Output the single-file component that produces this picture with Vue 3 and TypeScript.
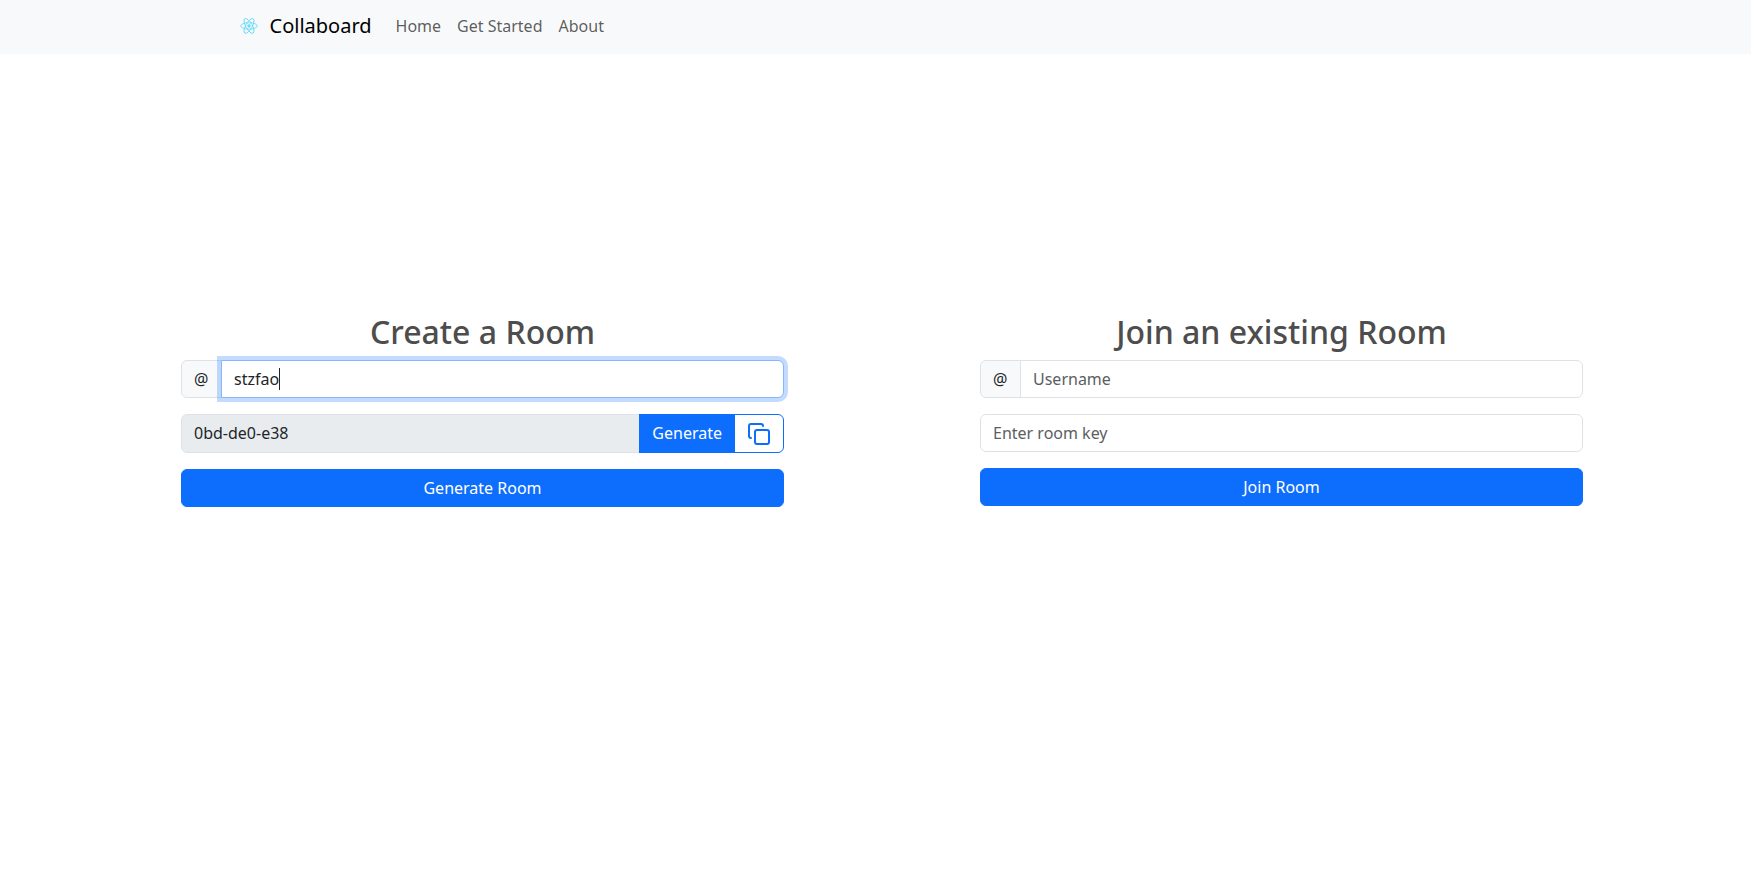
<script setup lang="ts">
import { nextTick, onMounted, ref, watch } from 'vue'

interface NavItem {
  label: string
  href: string
}

const navItems: NavItem[] = [
  { label: 'Home', href: '#home' },
  { label: 'Get Started', href: '#get-started' },
  { label: 'About', href: '#about' },
]

const username = ref('stzfao')
const roomKey = ref('0bd-de0-e38')
const joinName = ref('')
const joinKey = ref('')
const usernameInput = ref<HTMLInputElement | null>(null)
const caretLeft = ref(0)
const focused = ref(false)

const hexGroup = (): string =>
  Math.floor(Math.random() * 4096).toString(16).padStart(3, '0')

function generateKey(): void {
  roomKey.value = [hexGroup(), hexGroup(), hexGroup()].join('-')
}

function copyKey(): void {
  navigator.clipboard?.writeText(roomKey.value)
}

// Places the steady caret after the characters that precede the selection.
function placeCaret(): void {
  const input = usernameInput.value
  const context = document.createElement('canvas').getContext('2d')
  if (!input || !context) return
  const style = getComputedStyle(input)
  context.font = `${style.fontSize} ${style.fontFamily}`
  const before = input.value.slice(0, input.selectionStart ?? input.value.length)
  const start = parseFloat(style.paddingLeft) + parseFloat(style.borderLeftWidth)
  caretLeft.value = Math.round(start + context.measureText(before).width - input.scrollLeft)
}

watch(username, () => nextTick(placeCaret))

onMounted(() => {
  const input = usernameInput.value
  input?.focus()
  input?.setSelectionRange(input.value.length, input.value.length)
  placeCaret()
})
</script>

<template>
  <div class="page">
    <header class="navbar">
      <div class="navbar-inner">
        <a class="brand" href="#home">
          <svg class="brand-logo" viewBox="0 0 842 596" fill="none" stroke="#61dafb" stroke-width="24" aria-hidden="true">
            <circle cx="421" cy="296" r="46" fill="#61dafb" stroke="none" />
            <ellipse cx="421" cy="296" rx="233" ry="90" />
            <ellipse cx="421" cy="296" rx="233" ry="90" transform="rotate(60 421 296)" />
            <ellipse cx="421" cy="296" rx="233" ry="90" transform="rotate(120 421 296)" />
          </svg>
          <span>Collaboard</span>
        </a>
        <nav class="nav">
          <a v-for="item in navItems" :key="item.label" class="nav-link" :href="item.href">{{ item.label }}</a>
        </nav>
      </div>
    </header>

    <main class="rooms">
      <form class="room" @submit.prevent>
        <h2>Create a Room</h2>
        <div class="group">
          <label class="addon" for="create-name">@</label>
          <div class="caret-field">
            <input
              id="create-name"
              ref="usernameInput"
              v-model="username"
              class="field"
              type="text"
              placeholder="Username"
              aria-label="Username"
              autocomplete="off"
              spellcheck="false"
              @focus="focused = true"
              @blur="focused = false"
              @keyup="placeCaret"
              @click="placeCaret"
            />
            <span v-if="focused" class="caret" :style="{ left: caretLeft + 'px' }"></span>
          </div>
        </div>
        <div class="group group-key">
          <input v-model="roomKey" class="field" type="text" aria-label="Room key" disabled />
          <button class="btn" type="button" @click="generateKey">Generate</button>
          <button class="btn btn-outline" type="button" aria-label="Copy room key" @click="copyKey">
            <svg width="24" height="24" viewBox="0 0 24 24" fill="none" stroke="currentColor" stroke-width="2" stroke-linecap="round" stroke-linejoin="round" aria-hidden="true">
              <rect x="8" y="8" width="14" height="14" rx="2" />
              <path d="M4 16c-1.1 0-2-.9-2-2V4c0-1.1.9-2 2-2h10c1.1 0 2 .9 2 2" />
            </svg>
          </button>
        </div>
        <button class="btn" type="submit">Generate Room</button>
      </form>

      <form class="room" @submit.prevent>
        <h2>Join an existing Room</h2>
        <div class="group">
          <label class="addon" for="join-name">@</label>
          <input id="join-name" v-model="joinName" class="field" type="text" placeholder="Username" aria-label="Username" />
        </div>
        <div class="group">
          <input v-model="joinKey" class="field" type="text" placeholder="Enter room key" aria-label="Enter room key" />
        </div>
        <button class="btn" type="submit">Join Room</button>
      </form>
    </main>
  </div>
</template>

<style>
body {
  margin: 0;
  background: #fff;
}
</style>

<style scoped>
.page,
.page * {
  box-sizing: border-box;
}

.page {
  font-family: "Noto Sans", "Liberation Sans", sans-serif;
  font-size: 16px;
  line-height: 24px;
  color: #212529;
}

.navbar {
  padding-bottom: 2px;
  background: #f8f9fa;
}

.navbar-inner {
  display: flex;
  align-items: center;
  max-width: 1284px;
  min-height: 52px;
  margin: 0 auto;
}

.brand {
  display: flex;
  align-items: center;
  gap: 6px;
  margin-right: 16px;
  font-size: 20px;
  line-height: 30px;
  color: #000;
  text-decoration: none;
}

.brand-logo {
  width: 30px;
  height: 30px;
}

.nav {
  display: flex;
}

.nav-link {
  padding: 0 8px;
  color: rgba(0, 0, 0, 0.65);
  text-decoration: none;
}

.rooms {
  display: flex;
  align-items: flex-start;
  gap: 196px;
  padding: 259px 168px 24px 181px;
}

.room {
  display: flex;
  flex: 1;
  flex-direction: column;
  gap: 16px;
  min-width: 0;
}

.room h2 {
  margin: 0 0 -7px;
  font-size: 32px;
  font-weight: 500;
  line-height: 38px;
  text-align: center;
  color: #4d4d4d;
}

.group {
  display: flex;
}

.addon,
.field,
.btn {
  padding: 6px 12px;
  border: 1px solid #dee2e6;
  border-radius: 6px;
  font: inherit;
}

.addon {
  min-width: 41px;
  background: #f8f9fa;
}

.field {
  flex: 1;
  min-width: 0;
  color: #212529;
  background: #fff;
  outline: 0;
}

.field::placeholder {
  color: #5b5e62;
  opacity: 1;
}

.field:focus {
  z-index: 1;
  position: relative;
  border-color: #86b7fe;
  box-shadow: 0 0 0 4px rgba(13, 110, 253, 0.25);
}

.field:disabled {
  background: #e9ecef;
}

.caret-field {
  position: relative;
  display: flex;
  flex: 1;
  min-width: 0;
}

.caret-field .field {
  border-top-left-radius: 0;
  border-bottom-left-radius: 0;
  caret-color: transparent;
}

.caret {
  position: absolute;
  z-index: 2;
  top: 8px;
  bottom: 8px;
  width: 1px;
  background: #212529;
  pointer-events: none;
}

.btn {
  border-color: #0d6efd;
  color: #fff;
  background: #0d6efd;
  cursor: pointer;
}

.group-key .field,
.group-key .btn:not(.btn-outline) {
  padding-bottom: 7px;
}

.btn-outline {
  color: #0d6efd;
  background: #fff;
}

.btn svg {
  display: block;
  margin-top: 1px;
}

.group > :not(:first-child) {
  margin-left: -1px;
  border-top-left-radius: 0;
  border-bottom-left-radius: 0;
}

.group > :not(:last-child) {
  border-top-right-radius: 0;
  border-bottom-right-radius: 0;
}
</style>
